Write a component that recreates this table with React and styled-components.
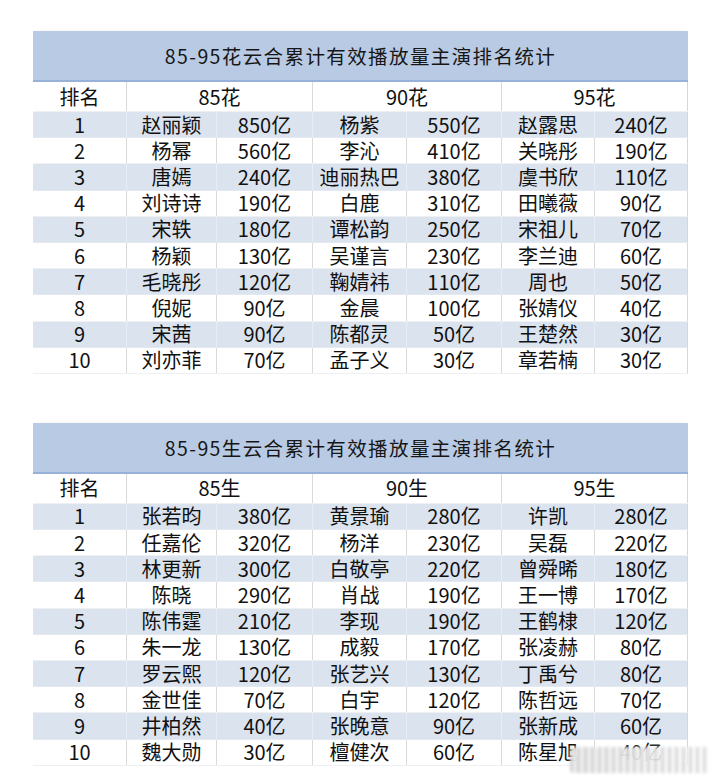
import React from 'react'
import styled, { createGlobalStyle } from 'styled-components'

const GlobalStyle = createGlobalStyle`
  html, body {
    margin: 0;
    padding: 0;
    background: #fff;
  }
  body {
    font-family: "Noto Sans CJK SC", "Noto Sans", "Liberation Sans", sans-serif;
    color: #111;
  }
`

const COLS = '94px 90px 96px 94px 95px 93px 93px'

const Page = styled.div`
  display: flex;
  flex-direction: column;
  gap: 49px;
  padding: 31px 0 0 33px;
  width: 720px;
  height: 783px;
  box-sizing: border-box;
  overflow: hidden;
`

const Table = styled.div`
  position: relative;
  width: 655px;
  box-shadow: 0 -6px 6px -6px rgba(0, 0, 0, 0.06);
`

const TitleBar = styled.div`
  height: 49px;
  background: #b9cbe4;
  border-bottom: 2px solid #98b1d8;
  display: flex;
  align-items: center;
  justify-content: center;
  font-size: 19.5px;
  letter-spacing: 1.4px;
  color: #161616;
`

const Row = styled.div`
  display: grid;
  grid-template-columns: ${COLS};
  height: ${p => (p.$head ? '30px' : '26.2px')};
  background: ${p => (p.$striped ? '#dbe3ef' : '#fff')};
  border-bottom: 1px solid ${p => (p.$striped ? '#e4e9f1' : '#eef0f4')};
  box-sizing: border-box;
`

const Cell = styled.div`
  grid-column: span ${p => p.$span || 1};
  display: flex;
  align-items: center;
  justify-content: center;
  font-size: 20px;
  line-height: 1;
  white-space: nowrap;
  border-right: 1px solid ${p => (p.$striped ? '#e8edf4' : '#dadada')};
  &:last-child {
    border-right: 1px solid #d6d6d6;
  }
`

const Watermark = styled.div`
  position: absolute;
  left: 537px;
  top: 324px;
  width: 140px;
  height: 26px;
  background:
    repeating-linear-gradient(90deg, rgba(190,190,190,0.55) 0 3px, rgba(255,255,255,0) 3px 7px),
    linear-gradient(90deg, rgba(235,235,235,0.95), rgba(245,245,245,0.9) 60%, rgba(250,250,250,0.6));
  filter: blur(1.5px);
  border-radius: 4px;
`

const flowers = [
  ['赵丽颖', '850亿', '杨紫', '550亿', '赵露思', '240亿'],
  ['杨幂', '560亿', '李沁', '410亿', '关晓彤', '190亿'],
  ['唐嫣', '240亿', '迪丽热巴', '380亿', '虞书欣', '110亿'],
  ['刘诗诗', '190亿', '白鹿', '310亿', '田曦薇', '90亿'],
  ['宋轶', '180亿', '谭松韵', '250亿', '宋祖儿', '70亿'],
  ['杨颖', '130亿', '吴谨言', '230亿', '李兰迪', '60亿'],
  ['毛晓彤', '120亿', '鞠婧祎', '110亿', '周也', '50亿'],
  ['倪妮', '90亿', '金晨', '100亿', '张婧仪', '40亿'],
  ['宋茜', '90亿', '陈都灵', '50亿', '王楚然', '30亿'],
  ['刘亦菲', '70亿', '孟子义', '30亿', '章若楠', '30亿'],
]

const actors = [
  ['张若昀', '380亿', '黄景瑜', '280亿', '许凯', '280亿'],
  ['任嘉伦', '320亿', '杨洋', '230亿', '吴磊', '220亿'],
  ['林更新', '300亿', '白敬亭', '220亿', '曾舜晞', '180亿'],
  ['陈晓', '290亿', '肖战', '190亿', '王一博', '170亿'],
  ['陈伟霆', '210亿', '李现', '190亿', '王鹤棣', '120亿'],
  ['朱一龙', '130亿', '成毅', '170亿', '张凌赫', '80亿'],
  ['罗云熙', '120亿', '张艺兴', '130亿', '丁禹兮', '80亿'],
  ['金世佳', '70亿', '白宇', '120亿', '陈哲远', '70亿'],
  ['井柏然', '40亿', '张晚意', '90亿', '张新成', '60亿'],
  ['魏大勋', '30亿', '檀健次', '60亿', '陈星旭', '40亿'],
]

const RankTable = ({ title, suffix, rows, children }) => (
  <Table>
    <TitleBar>{title}</TitleBar>
    <Row $head>
      <Cell>排名</Cell>
      <Cell $span={2}>85{suffix}</Cell>
      <Cell $span={2}>90{suffix}</Cell>
      <Cell $span={2}>95{suffix}</Cell>
    </Row>
    {rows.map((r, i) => {
      const striped = i % 2 === 0
      return (
        <Row key={i} $striped={striped}>
          <Cell $striped={striped}>{i + 1}</Cell>
          {r.map((v, j) => (
            <Cell key={j} $striped={striped}>{v}</Cell>
          ))}
        </Row>
      )
    })}
    {children}
  </Table>
)

export default function App() {
  return (
    <>
      <GlobalStyle />
      <Page>
        <RankTable title="85-95花云合累计有效播放量主演排名统计" suffix="花" rows={flowers} />
        <RankTable title="85-95生云合累计有效播放量主演排名统计" suffix="生" rows={actors}>
          <Watermark />
        </RankTable>
      </Page>
    </>
  )
}
